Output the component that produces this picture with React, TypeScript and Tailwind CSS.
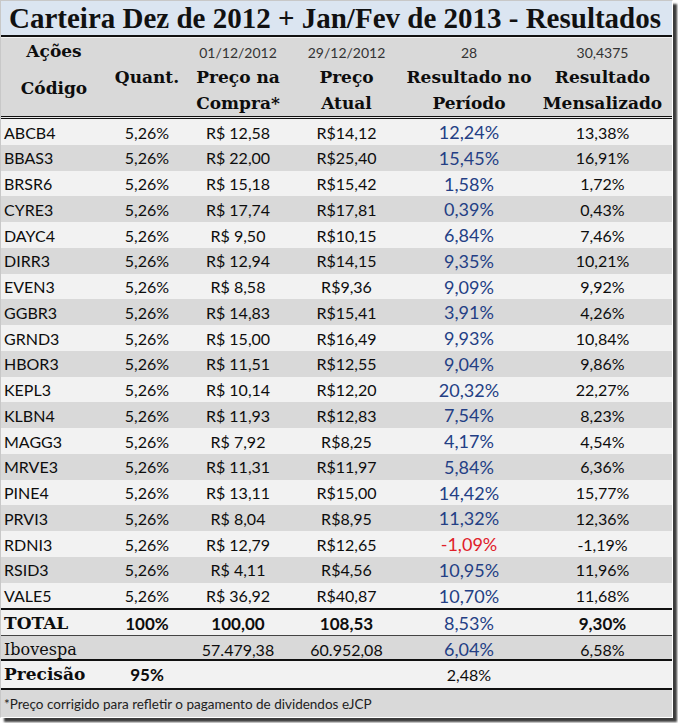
const rows: [string, string, string, string, string][] = [
  ["ABCB4", "R$ 12,58", "R$14,12", "12,24%", "13,38%"],
  ["BBAS3", "R$ 22,00", "R$25,40", "15,45%", "16,91%"],
  ["BRSR6", "R$ 15,18", "R$15,42", "1,58%", "1,72%"],
  ["CYRE3", "R$ 17,74", "R$17,81", "0,39%", "0,43%"],
  ["DAYC4", "R$ 9,50", "R$10,15", "6,84%", "7,46%"],
  ["DIRR3", "R$ 12,94", "R$14,15", "9,35%", "10,21%"],
  ["EVEN3", "R$ 8,58", "R$9,36", "9,09%", "9,92%"],
  ["GGBR3", "R$ 14,83", "R$15,41", "3,91%", "4,26%"],
  ["GRND3", "R$ 15,00", "R$16,49", "9,93%", "10,84%"],
  ["HBOR3", "R$ 11,51", "R$12,55", "9,04%", "9,86%"],
  ["KEPL3", "R$ 10,14", "R$12,20", "20,32%", "22,27%"],
  ["KLBN4", "R$ 11,93", "R$12,83", "7,54%", "8,23%"],
  ["MAGG3", "R$ 7,92", "R$8,25", "4,17%", "4,54%"],
  ["MRVE3", "R$ 11,31", "R$11,97", "5,84%", "6,36%"],
  ["PINE4", "R$ 13,11", "R$15,00", "14,42%", "15,77%"],
  ["PRVI3", "R$ 8,04", "R$8,95", "11,32%", "12,36%"],
  ["RDNI3", "R$ 12,79", "R$12,65", "-1,09%", "-1,19%"],
  ["RSID3", "R$ 4,11", "R$4,56", "10,95%", "11,96%"],
  ["VALE5", "R$ 36,92", "R$40,87", "10,70%", "11,68%"],
];

const cols = "grid grid-cols-[106px_80px_102px_115px_130px_137px] items-center";
const serif = "font-['DejaVu_Serif',serif]";

const App = () => {
  return (
    <div className="w-[678px] h-[723px] bg-white font-['Lato',sans-serif] text-[#0d0d0d]">
      <div className="w-[673px] h-[718px] border border-l-[#c8c8c8] border-t-[#c8c8c8] border-r-white border-b-white shadow-[4px_4px_2px_#3c3c3c] flex flex-col">
        {/* titulo */}
        <div className="h-[34px] bg-[#dbe5f1] flex items-center pl-[8px] pt-[1px]">
          <span className="font-['Liberation_Serif',serif] font-bold text-[29px] leading-none text-[#111]">
            Carteira Dez de 2012 + Jan/Fev de 2013 - Resultados
          </span>
        </div>
        <div className="h-[2px] bg-[#111]" />

        {/* cabecalho */}
        <div className={`${cols} h-[79px] bg-[#d9d9d9] border-t border-[#f2f2f2] items-stretch`}>
          <div className={`${serif} font-bold text-[17px] flex flex-col items-center`}>
            <div className="h-[26px] flex items-center pt-[2px]">Ações</div>
            <div className="flex-1 flex items-center pb-[3px]">Código</div>
          </div>
          <div className={`${serif} font-bold text-[17px] flex flex-col items-center`}>
            <div className="h-[26px]" />
            <div className="h-[27px] flex items-center">Quant.</div>
          </div>
          {[
            ["01/12/2012", "Preço na", "Compra*"],
            ["29/12/2012", "Preço", "Atual"],
            ["28", "Resultado no", "Período"],
            ["30,4375", "Resultado", "Mensalizado"],
          ].map(([d, a, b]) => (
            <div key={d} className="flex flex-col items-center">
              <div className="h-[26px] flex items-center text-[14px] text-[#333] pt-[3px]">{d}</div>
              <div className={`${serif} font-bold text-[17px] h-[27px] flex items-center`}>{a}</div>
              <div className={`${serif} font-bold text-[17px] h-[25px] flex items-center`}>{b}</div>
            </div>
          ))}
        </div>
        <div className="h-[1px] bg-[#111]" />
        <div className="h-[1px] bg-[#e8e8e8]" />
        <div className="h-[1px] bg-[#111]" />

        {/* linhas */}
        {rows.map(([code, compra, atual, per, mes], i) => (
          <div
            key={code}
            className={`${cols} h-[25.75px] text-[16px] ${i % 2 === 0 ? "bg-[#f2f2f2]" : "bg-[#d9d9d9]"}`}
          >
            <div className="pl-[3px]">{code}</div>
            <div className="text-center">5,26%</div>
            <div className="text-center">{compra}</div>
            <div className="text-center">{atual}</div>
            <div className={`text-center text-[18px] ${per.startsWith("-") ? "text-[#e0202a]" : "text-[#243f85]"}`}>
              {per}
            </div>
            <div className="text-center">{mes}</div>
          </div>
        ))}
        <div className="h-[2px] bg-[#111]" />

        {/* total */}
        <div className={`${cols} h-[25px] bg-[#f2f2f2] text-[16px]`}>
          <div className={`${serif} font-bold text-[17px] pl-[3px]`}>TOTAL</div>
          <div className="text-center font-bold text-[17px]">100%</div>
          <div className="text-center font-bold text-[17px]">100,00</div>
          <div className="text-center font-bold text-[17px]">108,53</div>
          <div className="text-center text-[18px] text-[#243f85]">8,53%</div>
          <div className="text-center font-bold text-[17px]">9,30%</div>
        </div>
        <div className="h-[1px] bg-[#444]" />

        <div className={`${cols} h-[23px] bg-[#d9d9d9] text-[16px]`}>
          <div className={`${serif} text-[16px] pl-[3px]`}>Ibovespa</div>
          <div />
          <div className="text-center">57.479,38</div>
          <div className="text-center">60.952,08</div>
          <div className="text-center text-[18px] text-[#243f85]">6,04%</div>
          <div className="text-center">6,58%</div>
        </div>
        <div className="h-[2px] bg-[#111]" />

        <div className={`${cols} h-[27px] bg-[#f2f2f2] text-[16px]`}>
          <div className={`${serif} font-bold text-[17px] pl-[3px]`}>Precisão</div>
          <div className="text-center font-bold text-[17px]">95%</div>
          <div />
          <div />
          <div className="text-center">2,48%</div>
          <div />
        </div>
        <div className="h-[2px] bg-[#111]" />

        <div className="flex-1 bg-[#d9d9d9] flex items-center pl-[3px] text-[13.5px] text-[#222]">
          *Preço corrigido para refletir o pagamento de dividendos eJCP
        </div>
      </div>
    </div>
  );
};

export default App;
